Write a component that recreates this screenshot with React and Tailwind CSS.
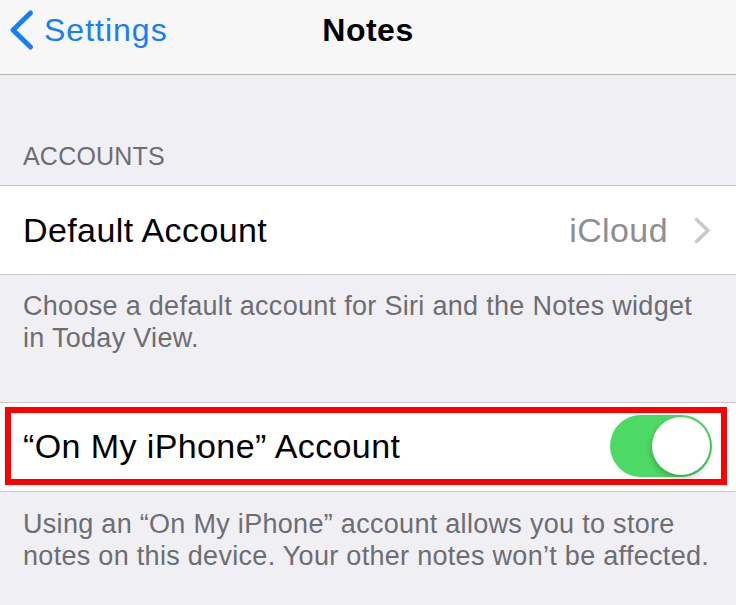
import React from "react";

const Toggle = ({ on }) => (
  <div
    className={`flex h-[62px] w-[102px] items-center rounded-full p-[2px] ${
      on ? "justify-end bg-[#4cd964]" : "justify-start bg-[#e5e5ea]"
    }`}
  >
    <div className="h-[58px] w-[58px] rounded-full bg-white shadow-[0_3px_6px_rgba(0,0,0,0.25)]" />
  </div>
);

const Footer = ({ children, className }) => (
  <p className={`px-[23px] text-[27px] leading-[32px] tracking-[0.3px] text-[#6d6d72] ${className}`}>
    {children}
  </p>
);

export default function App() {
  return (
    <div className="h-[605px] w-[736px] overflow-hidden bg-[#efeff4] font-['Liberation_Sans',Arial,sans-serif]">
      {/* nav bar */}
      <div className="grid h-[75px] grid-cols-[1fr_auto_1fr] border-b border-[#b2b2b2] bg-[#f7f7f7]">
        <div className="flex items-start">
          <svg width="40" height="74" viewBox="0 0 40 74" className="shrink-0">
            <polyline
              points="30.5,13 13,30 30.5,47"
              fill="none"
              stroke="#157efb"
              strokeWidth="5"
              strokeLinecap="round"
              strokeLinejoin="round"
            />
          </svg>
          <span className="ml-[4px] pt-[11px] text-[32px] leading-[38px] tracking-[1px] text-[#157efb]">
            Settings
          </span>
        </div>
        <h1 className="pt-[11px] text-[32px] font-bold leading-[38px] tracking-[0.5px] text-black">
          Notes
        </h1>
        <div />
      </div>

      {/* accounts section */}
      <div className="px-[23px] pb-[14px] pt-[66px] text-[25px] leading-[30px] tracking-[0.2px] text-[#6d6d72]">
        ACCOUNTS
      </div>
      <div className="flex h-[90px] items-center justify-between border-y border-[#c8c7cc] bg-white pl-[23px] pr-[25px] text-[34px] tracking-[0.4px]">
        <span className="text-black">Default Account</span>
        <div className="flex items-center gap-[26px]">
          <span className="text-[#8e8e93]">iCloud</span>
          <svg width="17" height="27" viewBox="0 0 17 27">
            <polyline
              points="2.5,2.5 14,13.5 2.5,24.5"
              fill="none"
              stroke="#c7c7cc"
              strokeWidth="3.5"
              strokeLinecap="round"
              strokeLinejoin="round"
            />
          </svg>
        </div>
      </div>
      <Footer className="pt-[15px] pb-[48px]">
        Choose a default account for Siri and the Notes widget in Today View.
      </Footer>

      {/* on my iphone */}
      <div className="h-[90px] border-y border-[#c8c7cc] bg-white pb-[6px] pl-[5px] pr-[9px] pt-[4px]">
        <div className="flex h-full items-center justify-between border-[6px] border-[#ff0000] pl-[12px] pr-[9px]">
          <span className="text-[34px] tracking-[0.4px] text-black">“On My iPhone” Account</span>
          <Toggle on />
        </div>
      </div>
      <Footer className="pt-[16px]">
        Using an “On My iPhone” account allows you to store notes on this device. Your other notes won’t be affected.
      </Footer>
    </div>
  );
}
